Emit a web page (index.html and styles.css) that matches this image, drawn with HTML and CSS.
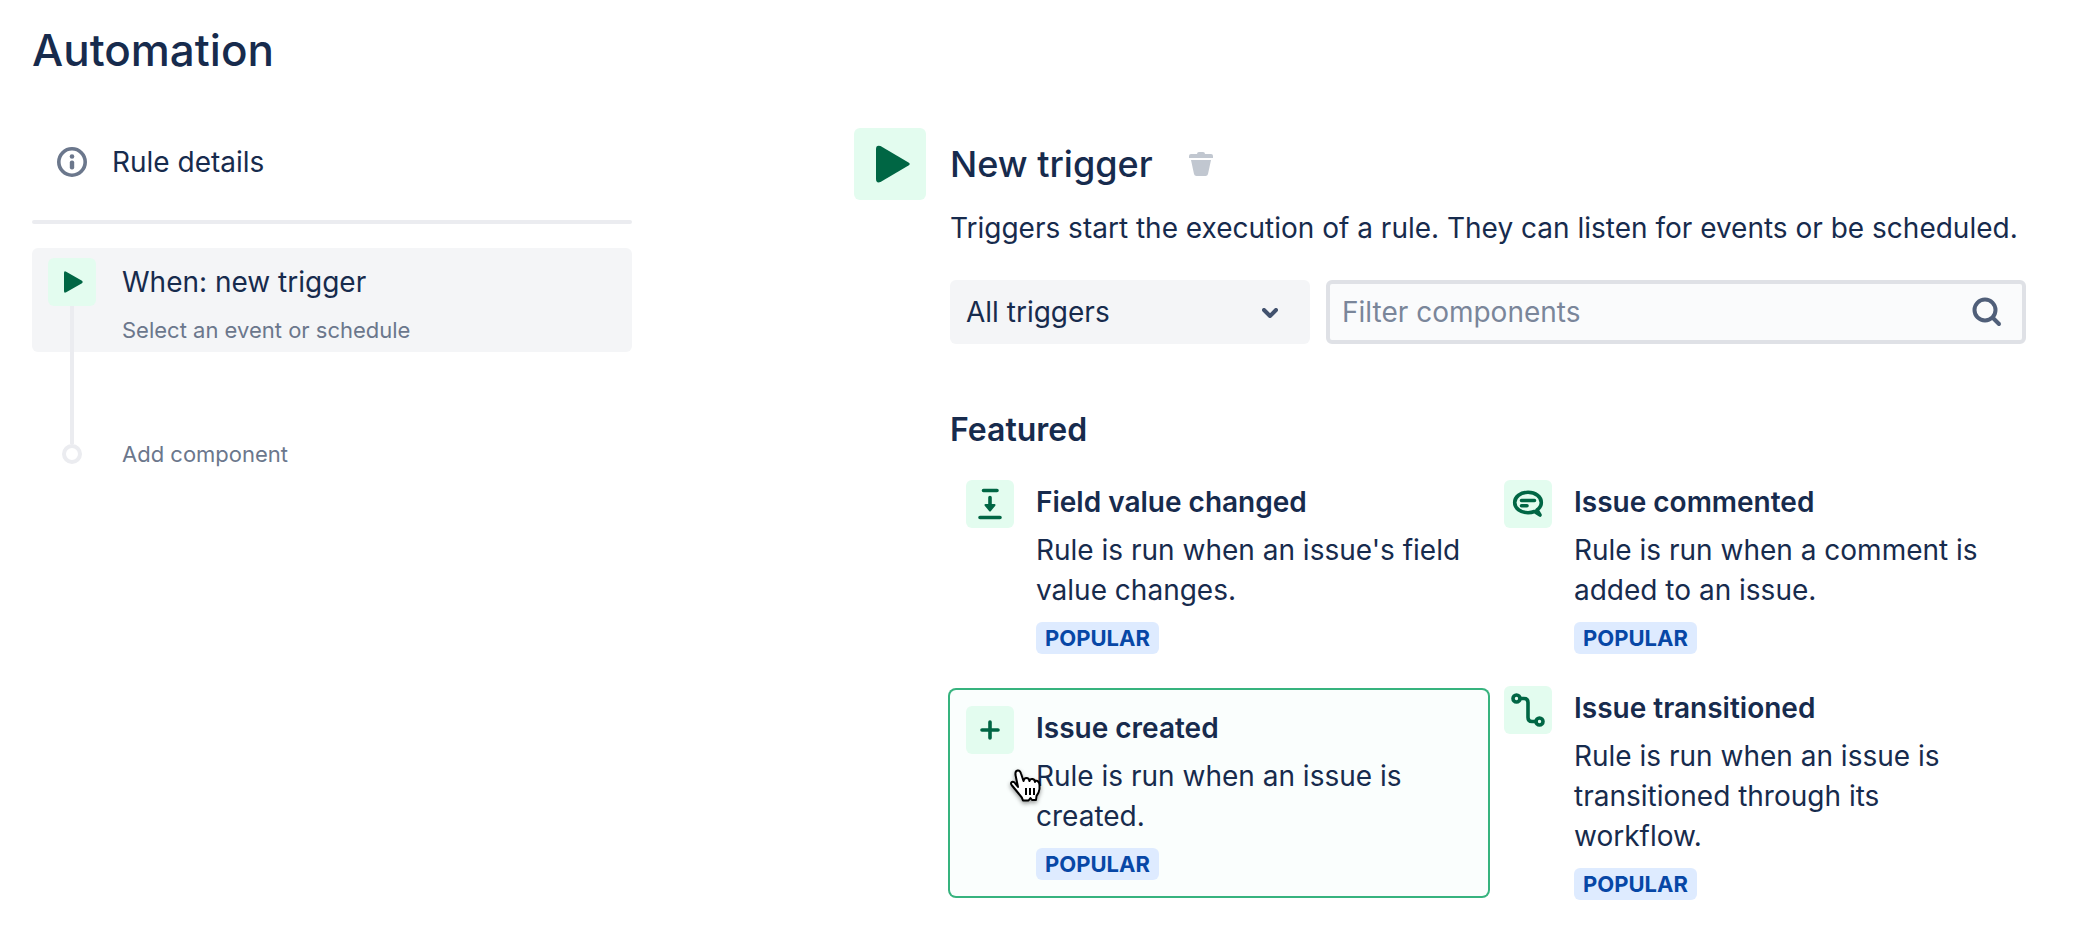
FILE: index.html
```html
<!DOCTYPE html>
<html lang="en">

<head>
    <meta charset="UTF-8">
    <meta name="viewport" content="width=device-width, initial-scale=1.0">
    <title>Automation</title>
    <link rel="stylesheet" href="styles.css">
</head>

<body>
    <h1>Automation</h1>
    <div class="layout">
        <aside class="sidebar">
            <a class="details" href="#">
                <svg class="info" viewBox="0 0 32 32">
                    <circle cx="16" cy="16" r="13.2" fill="none" stroke="#6b778c" stroke-width="3.6" />
                    <circle cx="16" cy="10.5" r="2.3" fill="#6b778c" />
                    <rect x="13.8" y="14.5" width="4.400" height="9" rx="2" fill="#6b778c" />
                </svg>
                Rule details
            </a>
            <hr>
            <a class="step" href="#">
                <span class="icon">
                    <svg viewBox="0 0 48 48">
                        <path d="M16 15v18q0 2.500 2.200 1.200l15.800-9q1.600-1.200 0-2.400l-15.800-9q-2.200-1.300-2.200 1.200z" fill="#006644" />
                    </svg>
                </span>
                <span class="step-text">
                    <span>When: new trigger</span>
                    <small>Select an event or schedule</small>
                </span>
            </a>
            <div class="add">
                <span class="dot"></span>
                <a href="#">Add component</a>
            </div>
        </aside>

        <main>
            <span class="icon big">
                <svg viewBox="0 0 72 72">
                    <path d="M22 21v30q0 4.500 4.500 3l28-16.500q2.500-1.500 0-3l-28-16.500q-4.500-1.500-4.500 3z" fill="#006644" />
                </svg>
            </span>
            <div class="content">
                <div class="title">
                    <h2>New trigger</h2>
                    <button class="delete" aria-label="Delete">
                        <svg viewBox="0 0 24 24" fill="#c1c7d0">
                            <path d="M8 2q0-2 2-2h4q2 0 2 2h6q2 0 2 2v2H0V4q0-2 2-2z" />
                            <path d="M2 8h20l-3 14q-.500 2-2.500 2h-9q-2 0-2.500-2z" />
                        </svg>
                    </button>
                </div>
                <p class="intro">Triggers start the execution of a rule. They can listen for events or be scheduled.</p>
                <div class="filters">
                    <div class="select">
                        <select aria-label="Trigger category">
                            <option>All triggers</option>
                        </select>
                        <svg class="chevron" viewBox="0 0 16 10">
                            <path d="M2 2l6 6 6-6" />
                        </svg>
                    </div>
                    <div class="search">
                        <input type="text" placeholder="Filter components" aria-label="Filter components">
                        <svg class="glass" viewBox="0 0 30 30">
                            <circle cx="13" cy="13" r="10.500" />
                            <path d="M21 21l6 6" />
                        </svg>
                    </div>
                </div>

                <h3>Featured</h3>
                <div class="cards">
                    <a class="card" href="#">
                        <span class="icon">
                            <svg viewBox="0 0 48 48">
                                <path d="M17.500 10.500h13.500M14 37.500h20M24 17.500v9" />
                                <path d="M19.500 25h9l-4.500 5.500z" fill="#006644" stroke-width="2" />
                            </svg>
                        </span>
                        <div class="card-text">
                            <h4>Field value changed</h4>
                            <p>Rule is run when an issue's field value changes.</p>
                            <span class="tag">POPULAR</span>
                        </div>
                    </a>
                    <a class="card" href="#">
                        <span class="icon">
                            <svg viewBox="0 0 48 48">
                                <path d="M33 30c2.800-2 4.300-4.500 4.300-7.500 0-5.800-5.800-10.200-13.300-10.200s-13.300 4.400-13.300 10.200 5.800 10.200 13.300 10.200c2.300 0 4.500-.400 6.500-1.200l5.500 3.500z" />
                                <path d="M17.500 20.500h13M17.500 25.700h5.500" />
                            </svg>
                        </span>
                        <div class="card-text">
                            <h4>Issue commented</h4>
                            <p>Rule is run when a comment is added to an issue.</p>
                            <span class="tag">POPULAR</span>
                        </div>
                    </a>
                    <a class="card selected" href="#">
                        <span class="icon">
                            <svg viewBox="0 0 48 48">
                                <path d="M24 16v16M16 24h16" />
                            </svg>
                        </span>
                        <div class="card-text">
                            <h4>Issue created</h4>
                            <p>Rule is run when an issue is created.</p>
                            <span class="tag">POPULAR</span>
                        </div>
                        <svg class="cursor" viewBox="0 0 34 36">
                            <path d="M9 18L6.500 6Q6 2 8.500 1.500T12 4.500L14.500 12Q15 9 17.500 9T20.500 12Q21 9.500 23.500 10T26 13Q26.500 11 28.500 12T30.500 16V20Q30 24 27.500 27L27 31H23L21.500 29L19.500 31.500H14Q13 28 10 25L3 16.500Q1 14 3 13T7 15.500Z" />
                            <path d="M17 19v7M21 19v7M25 19v7" />
                        </svg>
                    </a>
                    <a class="card" href="#">
                        <span class="icon">
                            <svg viewBox="0 0 48 48">
                                <circle cx="12.500" cy="12.500" r="3.500" />
                                <circle cx="35.500" cy="35.500" r="3.500" />
                                <path d="M16 12.500h4q4 0 4 4v15q0 4 4 4h4" />
                            </svg>
                        </span>
                        <div class="card-text">
                            <h4>Issue transitioned</h4>
                            <p>Rule is run when an issue is transitioned through its workflow.</p>
                            <span class="tag">POPULAR</span>
                        </div>
                    </a>
                </div>
            </div>
        </main>
    </div>
</body>

</html>
```
FILE: styles.css
```css
* {
    box-sizing: border-box;
}

body {
    margin: 0;
    padding: 20px 74px 0 32px;
    background-color: #fff;
    color: #172b4d;
    font-family: Inter, "Liberation Sans", sans-serif;
    font-size: 28px;
    line-height: 40px;
}

h1, h2, h3, h4, p {
    margin: 0;
}

a {
    color: inherit;
    text-decoration: none;
}

svg {
    display: block;
}

h1 {
    font-size: 44px;
    font-weight: 500;
    line-height: 60px;
}

.layout {
    display: flex;
    justify-content: space-between;
    padding-top: 48px;
}

.sidebar {
    width: 600px;
}

.details {
    display: flex;
    align-items: center;
    gap: 24px;
    height: 68px;
    padding-left: 24px;
}

.info {
    width: 32px;
    height: 32px;
}

hr {
    height: 4px;
    margin: 24px 0;
    border: 0;
    border-radius: 2px;
    background-color: #ebecf0;
}

.icon {
    flex: none;
    width: 48px;
    height: 48px;
    border-radius: 6px;
    background-color: #e3fcef;
}

.icon.big {
    width: 72px;
    height: 72px;
}

.step {
    display: flex;
    gap: 26px;
    padding: 10px 16px;
    height: 104px;
    border-radius: 6px;
    background-color: #f4f5f7;
}

.step-text {
    display: flex;
    flex-direction: column;
    gap: 12px;
    padding-top: 4px;
}

small, .add {
    font-size: 22px;
    line-height: 32px;
    color: #6b778c;
}

/* the line runs from the step icon down to the dot */
.add {
    position: relative;
    display: flex;
    align-items: center;
    gap: 40px;
    padding: 86px 0 0 30px;
}

.add::before {
    content: "";
    position: absolute;
    left: 38px;
    top: -46px;
    bottom: 26px;
    width: 4px;
    background-color: #ebecf0;
}

.dot {
    width: 20px;
    height: 20px;
    border: 4px solid #ebecf0;
    border-radius: 50%;
}

main {
    display: flex;
    gap: 24px;
    width: 1172px;
}

.content {
    flex: 1;
}

.title {
    display: flex;
    align-items: center;
    gap: 36px;
    height: 72px;
}

h2 {
    font-size: 36px;
    font-weight: 500;
}

.delete {
    width: 24px;
    padding: 0;
    border: 0;
    background: none;
}

.intro {
    margin-top: 8px;
}

.filters {
    display: flex;
    gap: 16px;
    margin-top: 32px;
}

.select {
    position: relative;
    width: 360px;
}

select, input {
    display: block;
    width: 100%;
    height: 64px;
    border-radius: 6px;
    color: inherit;
    font: inherit;
}

select {
    appearance: none;
    padding: 0 16px;
    border: 0;
    background-color: #f4f5f7;
}

.chevron {
    position: absolute;
    right: 32px;
    top: 28px;
    width: 16px;
    fill: none;
    stroke: #42526e;
    stroke-width: 4;
    stroke-linecap: round;
    stroke-linejoin: round;
}

.search {
    position: relative;
    flex: 1;
}

input {
    padding: 0 64px 0 12px;
    border: 4px solid #dfe1e6;
    background-color: #fafbfc;
}

input::placeholder {
    color: #7a869a;
    opacity: 1;
}

.glass {
    position: absolute;
    right: 24px;
    top: 17px;
    width: 30px;
    fill: none;
    stroke: #505f79;
    stroke-width: 4;
    stroke-linecap: round;
}

h3 {
    margin-top: 66px;
    font-size: 32px;
    font-weight: 600;
}

.cards {
    display: grid;
    grid-template-columns: 1fr 1fr;
    align-items: start;
    margin-top: 14px;
}

.card {
    position: relative;
    display: flex;
    gap: 22px;
    padding: 16px;
}

.card .icon {
    fill: none;
    stroke: #006644;
    stroke-width: 3.6;
    stroke-linecap: round;
    stroke-linejoin: round;
}

.card-text {
    padding-top: 2px;
}

.card p {
    margin: 8px 0 12px;
}

.selected {
    margin-top: 20px;
    border-radius: 6px;
    background-color: #fafefd;
    box-shadow: 0 0 0 2px #36b37e;
}

h4 {
    font-size: 28px;
    font-weight: 600;
}

.tag {
    display: block;
    width: fit-content;
    padding: 0 9px;
    border-radius: 6px;
    background-color: #deebff;
    color: #0747a6;
    font-size: 22px;
    font-weight: 700;
    line-height: 32px;
}

.cursor {
    position: absolute;
    left: 59px;
    top: 79px;
    width: 34px;
    fill: #fff;
    stroke: #000;
    stroke-width: 2;
    stroke-linejoin: round;
    filter: drop-shadow(0 2px 2px rgba(0, 0, 0, 0.4));
}
```
